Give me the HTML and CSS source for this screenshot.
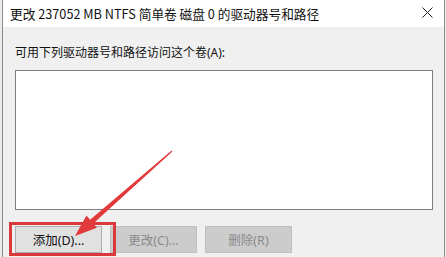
FILE: index.html
```html
<!DOCTYPE html>
<html lang="zh">
<head>
<meta charset="utf-8">
<link rel="stylesheet" href="styles.css">
</head>
<body>
<div class="window">
  <div class="titlebar">
    <span class="title">更改 237052 MB NTFS 简单卷 磁盘 0 的驱动器号和路径</span>
    <svg class="close" width="11" height="11" viewBox="0 0 11 11"><path d="M0.5 0.5 L10.5 10.5 M10.5 0.5 L0.5 10.5" stroke="#222" stroke-width="1" fill="none"/></svg>
  </div>
  <div class="content">
    <div class="label">可用下列驱动器号和路径访问这个卷(A):</div>
    <div class="listbox"></div>
    <div class="buttons">
      <div class="btn">添加(D)...</div>
      <div class="btn disabled">更改(C)...</div>
      <div class="btn disabled">删除(R)</div>
    </div>
  </div>
  <div class="highlight"></div>
  <svg class="arrow" width="446" height="257" viewBox="0 0 446 257">
    <polygon points="75,236 96.9,227.8 93.3,223.6 172.4,151.5 171.6,150.5 90.1,219.8 86.5,215.6" fill="#e2393a"/>
  </svg>
</div>
</body>
</html>
```

FILE: styles.css
```css
* { box-sizing: border-box; }
html, body {
  margin: 0;
  padding: 0;
  width: 446px;
  height: 257px;
  overflow: hidden;
  background: #ececec;
  font-family: "Noto Sans", "Noto Sans CJK SC", sans-serif;
}
.window {
  position: relative;
  margin-left: 2px;
  width: 443px;
  height: 257px;
  border-left: 1px solid #8c8c8c;
  border-right: 1px solid #8c8c8c;
  background: #f0f0f0;
}
.titlebar {
  height: 27px;
  background: #ffffff;
  display: flex;
  align-items: center;
  justify-content: space-between;
  padding: 0 11px 0 7px;
}
.title {
  font-family: "Noto Sans CJK SC", sans-serif;
  font-size: 12.7px;
  color: #111;
  white-space: nowrap;
}
.close { display: block; margin-top: -2px; }
.content {
  padding: 18px 11px 0 12px;
}
.label {
  font-size: 12px;
  line-height: 16px;
  color: #111;
  white-space: nowrap;
}
.listbox {
  margin-top: 9px;
  width: 418px;
  height: 140px;
  background: #fff;
  border: 1px solid #7f7f7f;
}
.buttons {
  display: flex;
  gap: 8px;
  margin-top: 16px;
}
.btn {
  width: 87px;
  height: 27px;
  background: #e1e1e1;
  border: 1px solid #adadad;
  font-size: 12.5px;
  color: #111;
  display: flex;
  align-items: center;
  justify-content: center;
  white-space: nowrap;
}
.btn.disabled {
  background: #cccccc;
  border-color: #bfbfbf;
  color: #8a8a8a;
}
.highlight {
  position: absolute;
  left: 6px;
  top: 222px;
  width: 107px;
  height: 34px;
  border: 3px solid #d9393b;
}
.arrow {
  position: absolute;
  left: -3px;
  top: 0;
  pointer-events: none;
}
```
